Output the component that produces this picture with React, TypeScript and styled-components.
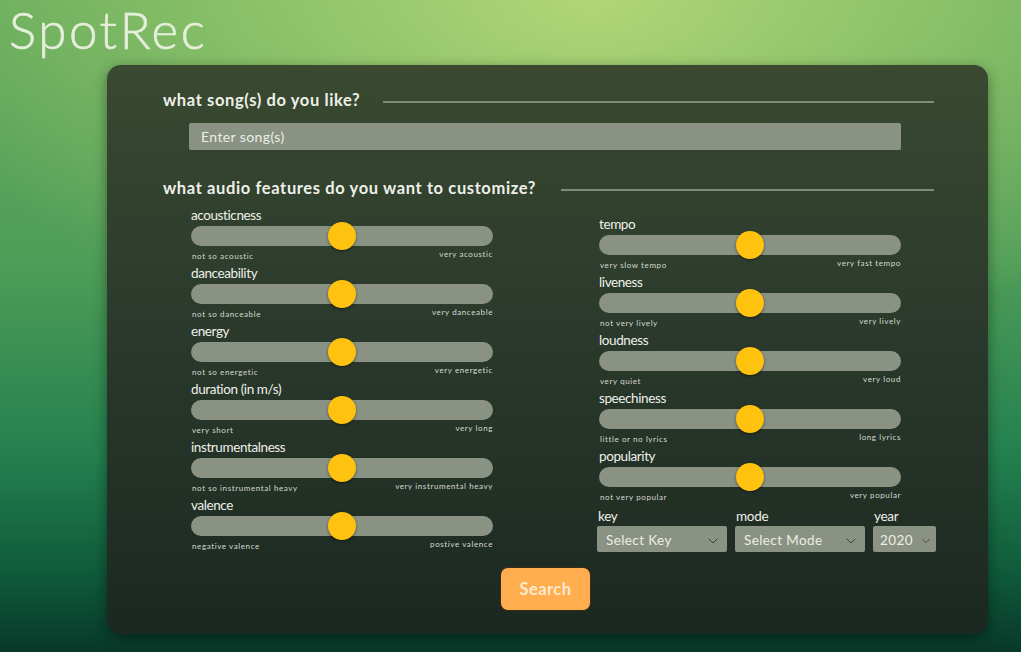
import React from "react";
import styled, { createGlobalStyle } from "styled-components";
import { ChevronDown } from "lucide-react";

const Global = createGlobalStyle`
  html, body { margin: 0; padding: 0; height: 100%; overflow: hidden; }
  body { font-family: "Lato", "Noto Sans", sans-serif; }
  #root { height: 100%; }
`;

const Page = styled.div`
  height: 100vh;
  box-sizing: border-box;
  background:
    radial-gradient(ellipse 70% 55% at 58% 0%, rgba(176, 214, 118, 1) 0%, rgba(176, 214, 118, 0) 100%),
    linear-gradient(180deg, #64aa5b 0%, #4f9d58 40%, #23804e 70%, #0f5a3b 88%, #08382a 100%);
  display: flex;
  flex-direction: column;
`;

const Title = styled.h1`
  margin: 0;
  padding: 2px 0 0 9px;
  font-family: "Lato", sans-serif;
  font-weight: 300;
  font-size: 51px;
  line-height: 56px;
  color: #e6efdc;
  letter-spacing: 2.6px;
  -webkit-text-stroke: 0.6px #e6efdc;
`;

const Card = styled.main`
  margin: 7px 0 0 107px;
  width: 881px;
  height: 569px;
  box-sizing: border-box;
  border-radius: 14px;
  background: linear-gradient(180deg, #3a4930 0%, #2b3a2c 45%, #1b2821 100%);
  box-shadow: 0 4px 14px rgba(0, 0, 0, 0.4);
  padding: 25px 54px 0 56px;
  display: flex;
  flex-direction: column;
`;

const SectionHeader = styled.div<{ $gap: number }>`
  display: flex;
  align-items: center;
  gap: ${(p) => p.$gap}px;
  height: 20px;
`;

const HeaderText = styled.h2`
  margin: 0;
  font-size: 16.5px;
  font-weight: 700;
  color: #eef0ea;
  white-space: nowrap;
  letter-spacing: 0.62px;
`;

const Rule = styled.div`
  flex: 1;
  height: 2px;
  margin-top: 4px;
  background: #7f8c78;
`;

const SongInput = styled.div`
  margin: 13px 33px 0 26px;
  height: 27px;
  background: #8a9283;
  border-radius: 2px;
  display: flex;
  align-items: center;
  padding-left: 12px;
  font-size: 14px;
  color: #eceee6;
  letter-spacing: 0.4px;
`;

const FeatureHeader = styled(SectionHeader)`
  margin-top: 28px;
`;

const Columns = styled.div`
  display: grid;
  grid-template-columns: 302px 302px;
  column-gap: 106px;
  margin-left: 28px;
  align-items: start;
`;

const Column = styled.div<{ $offset: number }>`
  display: flex;
  flex-direction: column;
  gap: 4px;
  padding-top: ${(p) => p.$offset}px;
`;

const SliderBlock = styled.div`
  display: flex;
  flex-direction: column;
`;

const SliderLabel = styled.div`
  font-size: 13.5px;
  line-height: 16px;
  color: #eef0ea;
  letter-spacing: -0.4px;
  margin-bottom: 3px;
`;

const Track = styled.div`
  position: relative;
  height: 20px;
  border-radius: 10px;
  background: #8a9283;
`;

const Thumb = styled.div`
  position: absolute;
  top: 50%;
  width: 28px;
  height: 28px;
  border-radius: 50%;
  background: #ffc20f;
  box-shadow: 0 1px 3px rgba(0, 0, 0, 0.45);
  transform: translate(-50%, -50%);
`;

const Ends = styled.div`
  display: flex;
  justify-content: space-between;
  align-items: flex-start;
  margin-top: 3px;
  height: 12px;
  padding: 0 0 0 1px;
  font-size: 8px;
  line-height: 10px;
  color: #d6dad2;
  letter-spacing: 0.6px;
`;

const EndLeft = styled.span`
  margin-top: 2px;
`;

const EndRight = styled.span``;

const Selects = styled.div`
  display: grid;
  grid-template-columns: 130px 130px 63px;
  column-gap: 8px;
  margin: 2px 0 0 -2px;
  width: 339px;
`;

const SelectField = styled.div`
  display: flex;
  flex-direction: column;
`;

const SelectLabel = styled.div`
  font-size: 13.5px;
  line-height: 16px;
  color: #eef0ea;
  letter-spacing: -0.3px;
  margin-bottom: 2px;
  padding-left: 1px;
`;

const SelectBox = styled.div<{ $narrow?: boolean }>`
  height: 26px;
  background: #8a9283;
  border-radius: 2px;
  display: flex;
  align-items: center;
  justify-content: space-between;
  padding: ${(p) => (p.$narrow ? "0 3px 0 7px" : "0 6px 0 9px")};
  font-size: 13.5px;
  color: #eceee6;
  letter-spacing: 0.4px;
  box-sizing: border-box;
  span { margin-top: 2px; }
  svg { margin-top: 3px; color: #3d4239; flex-shrink: 0; }
`;

const ButtonRow = styled.div`
  display: flex;
  justify-content: center;
  margin-top: 15px;
  padding-right: 6px;
`;

const SearchButton = styled.button`
  width: 91px;
  height: 44px;
  border: 1px solid #3a2a14;
  border-radius: 8px;
  background: #ffad4e;
  color: #ffe9cf;
  font-family: "Lato", sans-serif;
  font-weight: 700;
  font-size: 16.5px;
  letter-spacing: 0.4px;
  cursor: pointer;
`;

type Feature = { name: string; low: string; high: string; value: number };

const left: Feature[] = [
  { name: "acousticness", low: "not so acoustic", high: "very acoustic", value: 50 },
  { name: "danceability", low: "not so danceable", high: "very danceable", value: 50 },
  { name: "energy", low: "not so energetic", high: "very energetic", value: 50 },
  { name: "duration (in m/s)", low: "very short", high: "very long", value: 50 },
  { name: "instrumentalness", low: "not so instrumental heavy", high: "very instrumental heavy", value: 50 },
  { name: "valence", low: "negative valence", high: "postive valence", value: 50 },
];

const right: Feature[] = [
  { name: "tempo", low: "very slow tempo", high: "very fast tempo", value: 50 },
  { name: "liveness", low: "not very lively", high: "very lively", value: 50 },
  { name: "loudness", low: "very quiet", high: "very loud", value: 50 },
  { name: "speechiness", low: "little or no lyrics", high: "long lyrics", value: 50 },
  { name: "popularity", low: "not very popular", high: "very popular", value: 50 },
];

const Slider = ({ f }: { f: Feature }) => (
  <SliderBlock>
    <SliderLabel>{f.name}</SliderLabel>
    <Track>
      <Thumb style={{ left: `${f.value}%` }} />
    </Track>
    <Ends>
      <EndLeft>{f.low}</EndLeft>
      <EndRight>{f.high}</EndRight>
    </Ends>
  </SliderBlock>
);

const Select = ({ label, value, narrow }: { label: string; value: string; narrow?: boolean }) => (
  <SelectField>
    <SelectLabel>{label}</SelectLabel>
    <SelectBox $narrow={narrow}>
      <span>{value}</span>
      <ChevronDown size={narrow ? 14 : 16} strokeWidth={1.5} />
    </SelectBox>
  </SelectField>
);

export default function App() {
  return (
    <>
      <Global />
      <Page>
        <Title>SpotRec</Title>
        <Card>
          <SectionHeader $gap={23}>
            <HeaderText>what song(s) do you like?</HeaderText>
            <Rule />
          </SectionHeader>
          <SongInput>Enter song(s)</SongInput>
          <FeatureHeader $gap={25}>
            <HeaderText>what audio features do you want to customize?</HeaderText>
            <Rule />
          </FeatureHeader>
          <Columns>
            <Column $offset={9}>
              {left.map((f) => (
                <Slider key={f.name} f={f} />
              ))}
            </Column>
            <Column $offset={18}>
              {right.map((f) => (
                <Slider key={f.name} f={f} />
              ))}
              <Selects>
                <Select label="key" value="Select Key" />
                <Select label="mode" value="Select Mode" />
                <Select label="year" value="2020" narrow />
              </Selects>
            </Column>
          </Columns>
          <ButtonRow>
            <SearchButton>Search</SearchButton>
          </ButtonRow>
        </Card>
      </Page>
    </>
  );
}
